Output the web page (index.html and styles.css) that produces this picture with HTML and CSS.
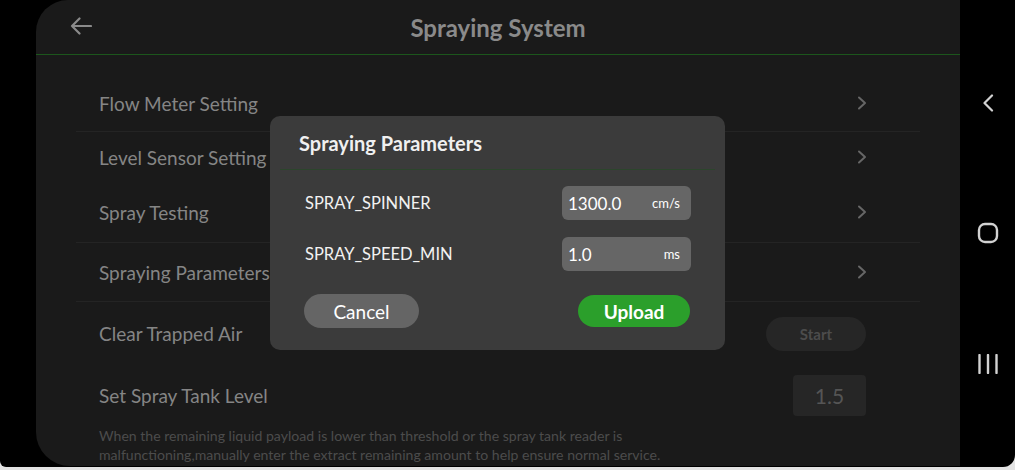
FILE: index.html
```html
<!DOCTYPE html>
<html lang="en">
<head>
<meta charset="utf-8">
<title>Spraying System</title>
<link rel="stylesheet" href="styles.css">
</head>
<body>
<div class="device">
  <main class="panel">
    <header class="topbar">
      <button class="back" aria-label="Back">
        <svg width="22" height="18" viewBox="0 0 22 18"><path d="M2 9H21M9.5 1.5L2 9l7.5 7.5" fill="none" stroke="#8a8a8a" stroke-width="2.2" stroke-linecap="round" stroke-linejoin="round"/></svg>
      </button>
      <h1 class="title">Spraying System</h1>
      <span></span>
    </header>

    <section class="list">
      <div class="row r1 sep">
        <span class="label">Flow Meter Setting</span>
        <svg class="chev" width="10" height="14" viewBox="0 0 10 14"><path d="M2 1.5L8 7l-6 5.5" fill="none" stroke="#666" stroke-width="2" stroke-linecap="round" stroke-linejoin="round"/></svg>
      </div>
      <div class="row r2">
        <span class="label">Level Sensor Setting</span>
        <svg class="chev" width="10" height="14" viewBox="0 0 10 14"><path d="M2 1.5L8 7l-6 5.5" fill="none" stroke="#666" stroke-width="2" stroke-linecap="round" stroke-linejoin="round"/></svg>
      </div>
      <div class="row r3 sep">
        <span class="label">Spray Testing</span>
        <svg class="chev" width="10" height="14" viewBox="0 0 10 14"><path d="M2 1.5L8 7l-6 5.5" fill="none" stroke="#666" stroke-width="2" stroke-linecap="round" stroke-linejoin="round"/></svg>
      </div>
      <div class="row r4 sep">
        <span class="label">Spraying Parameters</span>
        <svg class="chev" width="10" height="14" viewBox="0 0 10 14"><path d="M2 1.5L8 7l-6 5.5" fill="none" stroke="#666" stroke-width="2" stroke-linecap="round" stroke-linejoin="round"/></svg>
      </div>
      <div class="row r5">
        <span class="label">Clear Trapped Air</span>
        <button class="start">Start</button>
      </div>
      <div class="row r6">
        <span class="label">Set Spray Tank Level</span>
        <span class="level">1.5</span>
      </div>
      <p class="desc">When the remaining liquid payload is lower than threshold or the spray tank reader is malfunctioning,manually enter the extract remaining amount to help ensure normal service.</p>
    </section>

    <div class="modal">
      <div class="modal-head">Spraying Parameters</div>
      <div class="modal-body">
        <div class="param">
          <span class="pname">SPRAY_SPINNER</span>
          <span class="pinput"><span class="pval">1300.0</span><span class="punit">cm/s</span></span>
        </div>
        <div class="param">
          <span class="pname">SPRAY_SPEED_MIN</span>
          <span class="pinput"><span class="pval">1.0</span><span class="punit">ms</span></span>
        </div>
        <div class="actions">
          <button class="btn cancel">Cancel</button>
          <button class="btn upload">Upload</button>
        </div>
      </div>
    </div>
  </main>

  <nav class="sysnav">
    <svg width="12" height="18" viewBox="0 0 12 18"><path d="M10 1.5L2.5 9l7.5 7.5" fill="none" stroke="#d2d2d2" stroke-width="2.2" stroke-linecap="round" stroke-linejoin="round"/></svg>
    <svg class="home" width="22" height="22" viewBox="0 0 22 22"><rect x="2" y="2" width="18" height="18" rx="6" fill="none" stroke="#d2d2d2" stroke-width="2.4"/></svg>
    <svg class="recents" width="22" height="20" viewBox="0 0 22 20"><path d="M2.5 1v18M11 1v18M19.5 1v18" stroke="#d2d2d2" stroke-width="2.4" stroke-linecap="round"/></svg>
  </nav>
</div>
</body>
</html>
```

FILE: styles.css
```css
* { box-sizing: border-box; }

html, body {
  margin: 0;
  padding: 0;
}

body {
  background: #e4e4e4;
  font-family: "Lato", "Noto Sans", sans-serif;
  width: 1015px;
  height: 470px;
  overflow: hidden;
}

button {
  font-family: inherit;
  border: none;
  padding: 0;
  cursor: pointer;
}

.device {
  display: flex;
  width: 1015px;
  height: 467px;
  background: #000;
  border-radius: 0 0 12px 6px;
  overflow: hidden;
}

.panel {
  position: relative;
  margin-left: 36px;
  width: 924px;
  height: 466px;
  background: #1a1a1a;
  border-radius: 32px 0 0 34px;
}

.topbar {
  display: grid;
  grid-template-columns: 1fr auto 1fr;
  align-items: center;
  height: 55px;
  border-bottom: 1px solid #1c561c;
  padding: 0 34px 0 34px;
}

.back {
  background: none;
  justify-self: start;
  display: flex;
  margin-top: -2px;
}

.title {
  margin: 0;
  font-size: 24px;
  font-weight: 700;
  color: #8a8a8a;
}

.list {
  padding: 20px 40px 0 40px;
}

.row {
  display: flex;
  align-items: center;
  justify-content: space-between;
  padding: 0 53px 0 23px;
}

.row.sep {
  border-bottom: 1px solid #242424;
}

.r1 { height: 57px; }
.r2 { height: 50px; }
.r3 { height: 61px; }
.r4 { height: 59px; }
.r5 { height: 63px; padding-right: 54px; }
.r6 { height: 61px; padding-right: 54px; }

.label {
  font-size: 19px;
  color: #858585;
}

.start {
  width: 100px;
  height: 34px;
  border-radius: 17px;
  background: #262626;
  color: #4c4c4c;
  font-size: 15px;
  font-weight: 700;
}

.level {
  display: flex;
  align-items: center;
  justify-content: center;
  width: 73px;
  height: 41px;
  border-radius: 4px;
  background: #262626;
  color: #555;
  font-size: 21px;
}

.desc {
  margin: 0;
  padding-left: 23px;
  max-width: 660px;
  font-size: 14.1px;
  line-height: 19px;
  color: #4c4c4c;
}

/* modal */
.modal {
  position: absolute;
  left: 234px;
  top: 116px;
  width: 455px;
  height: 234px;
  background: #3b3b3b;
  border-radius: 10px;
}

.modal-head {
  height: 54px;
  margin: 0 10px;
  padding: 0 0 0 19px;
  display: flex;
  align-items: center;
  border-bottom: 1px solid #2c452c;
  font-size: 20px;
  font-weight: 700;
  color: #f0f0f0;
}

.modal-body {
  padding: 16px 34px 0 35px;
  display: flex;
  flex-direction: column;
}

.param {
  display: flex;
  align-items: center;
  justify-content: space-between;
  height: 34px;
  margin-bottom: 17px;
}

.param:nth-child(2) {
  margin-bottom: 23px;
}

.pname {
  font-size: 16.5px;
  color: #f2f2f2;
  margin-top: -1px;
}

.pinput {
  display: flex;
  align-items: center;
  justify-content: space-between;
  width: 129px;
  height: 34px;
  padding: 0 11px 0 6px;
  background: #666;
  border-radius: 6px;
  color: #fff;
}

.pval {
  font-size: 17px;
}

.punit {
  font-size: 13px;
}

.actions {
  display: flex;
  justify-content: space-between;
  align-items: center;
}

.btn {
  height: 34px;
  border-radius: 17px;
  color: #fff;
  font-size: 19px;
}

.cancel {
  width: 115px;
  margin-left: -1px;
  background: #656565;
}

.upload {
  width: 112px;
  height: 32px;
  margin-right: 1px;
  background: #2b9f2b;
  font-weight: 700;
}

/* system navigation */
.sysnav {
  flex: 1;
  display: flex;
  flex-direction: column;
  align-items: center;
  padding-top: 94px;
  gap: 110px;
}
```
